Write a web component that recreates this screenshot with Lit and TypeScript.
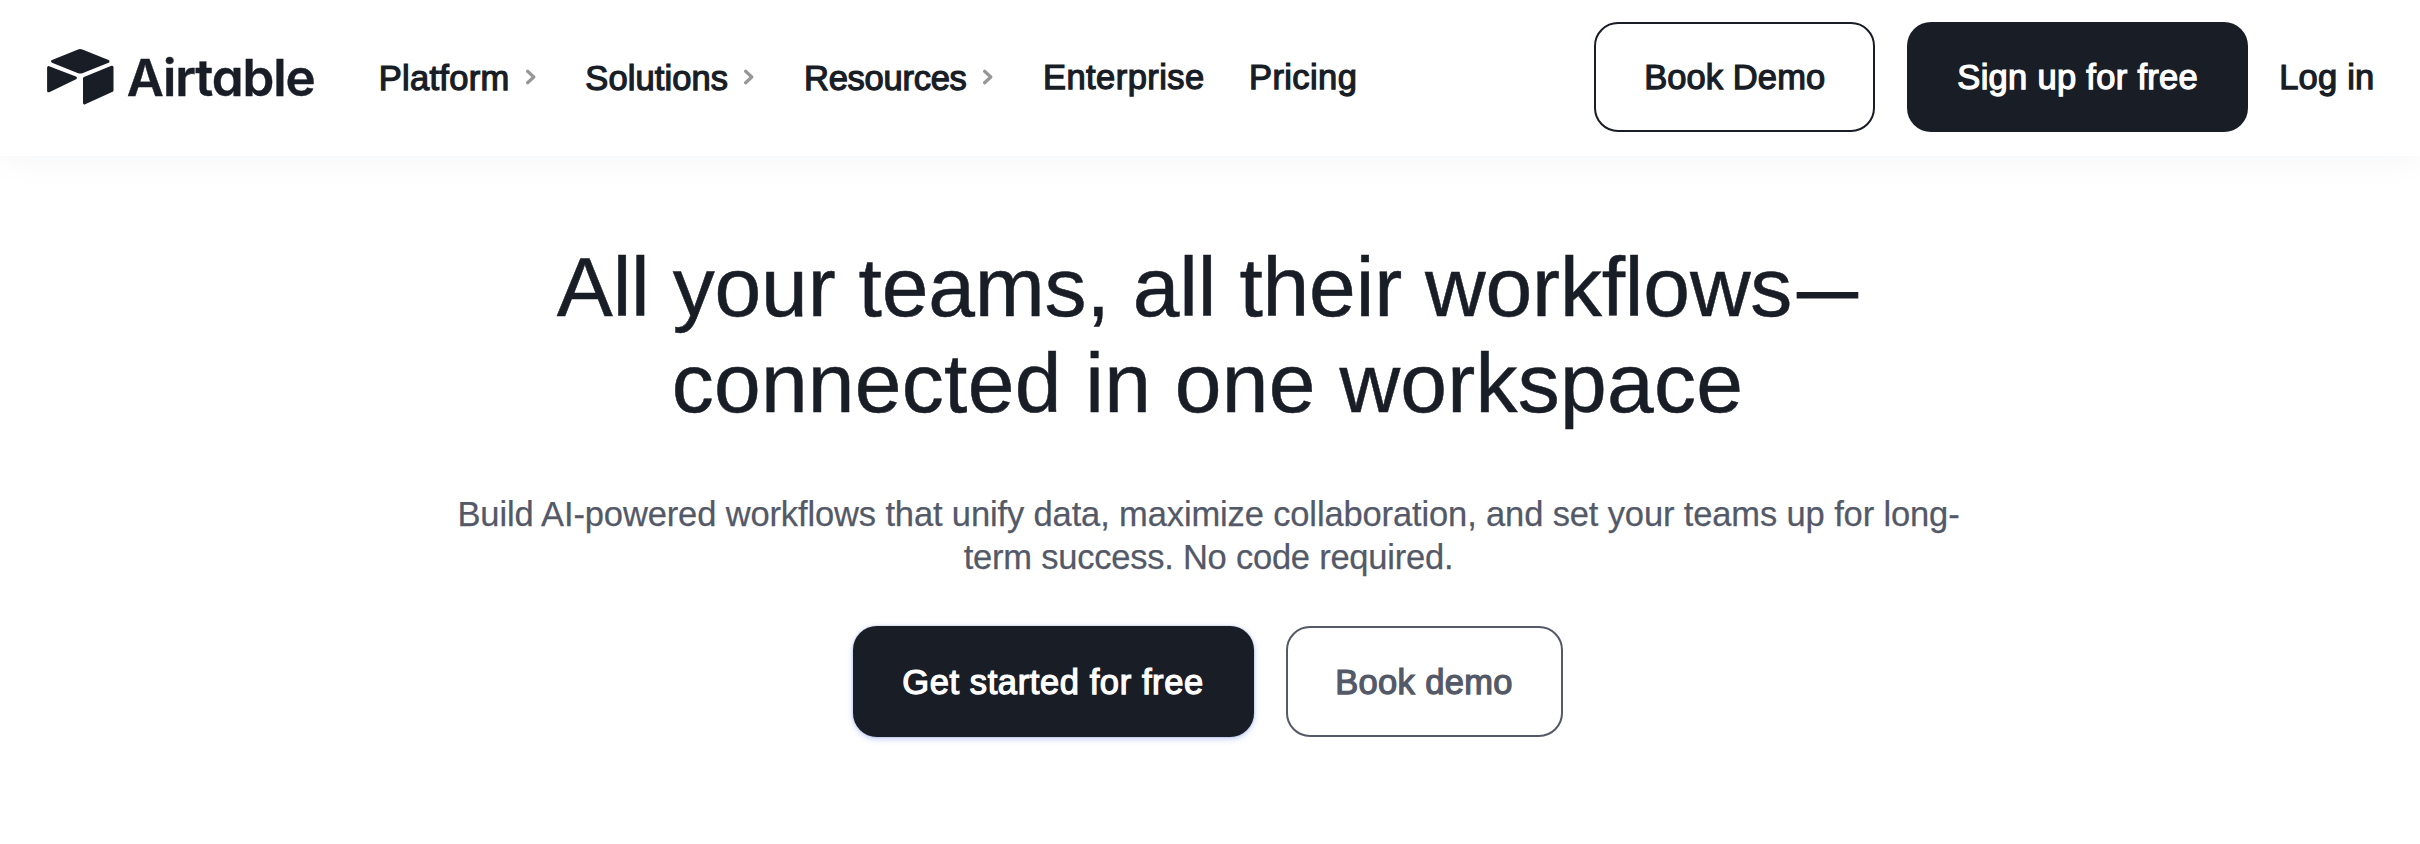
import { LitElement, html, css, svg, nothing } from "lit";
import { styleMap } from "lit/directives/style-map.js";

interface NavItem {
  label: string;
  tracking: number;
  menu: boolean;
}

const NAV: NavItem[] = [
  { label: "Platform", tracking: 0.3, menu: true },
  { label: "Solutions", tracking: 0.1, menu: true },
  { label: "Resources", tracking: -0.25, menu: true },
  { label: "Enterprise", tracking: 0.45, menu: false },
  { label: "Pricing", tracking: 0.4, menu: false },
];

const chevron = svg`<path d="M2.6 2.3 8.8 8 2.6 13.7" fill="none" stroke="#979797" stroke-width="3.2" stroke-linecap="round" stroke-linejoin="round"/>`;

class AppRoot extends LitElement {
  static styles = css`
    :host {
      display: block;
      min-height: 844px;
      background: #fff;
      color: #181d26;
      font-family: "Liberation Sans", Arial, sans-serif;
      font-size: 34.5px;
      overflow: hidden;
    }
    header {
      display: flex;
      align-items: center;
      box-sizing: border-box;
      height: 156px;
      padding: 22px 46px 24px;
      background: #fff;
      box-shadow: 0 0 2px rgba(0, 0, 0, 0.02), 0 4px 34px rgba(24, 50, 100, 0.045);
    }
    .logo {
      display: flex;
      align-items: center;
      width: 332.7px;
      flex: none;
    }
    .mark {
      display: block;
      width: 68px;
      height: 58px;
      margin-right: 12.8px;
    }
    .wordmark {
      padding-top: 1px;
      font-family: Inter, sans-serif;
      font-size: 51px;
      font-weight: 600;
      line-height: 60px;
      letter-spacing: -1.1px;
      font-feature-settings: "cv11";
      -webkit-text-stroke: 0.4px currentColor;
    }
    nav {
      display: grid;
      grid-template-columns: 206.6px 218.7px 239px 206px auto;
    }
    .item,
    .btn,
    .login {
      -webkit-text-stroke: 1.25px currentColor;
      white-space: nowrap;
    }
    .item {
      display: flex;
      align-items: center;
      line-height: 40px;
    }
    .item.menu {
      padding-top: 2px;
    }
    .chevron {
      flex: none;
      width: 11px;
      height: 16px;
      margin-left: 15px;
      margin-bottom: 2px;
    }
    .actions {
      display: flex;
      align-items: center;
      gap: 32px;
      margin-left: auto;
    }
    .btn {
      display: flex;
      align-items: center;
      justify-content: center;
      box-sizing: border-box;
      height: 110px;
      border-radius: 24px;
    }
    .outline {
      border: 2px solid currentColor;
    }
    .solid {
      background: #181d26;
      color: #fff;
    }
    .demo {
      width: 281px;
      letter-spacing: 0.1px;
    }
    .signup {
      width: 341px;
      letter-spacing: 0.3px;
    }
    .login {
      width: 94.8px;
      margin-left: -1px;
      letter-spacing: 0.2px;
    }
    .hero {
      display: flex;
      flex-direction: column;
      align-items: center;
      padding: 83px 5px 0 0;
      text-align: center;
      white-space: nowrap;
    }
    h1 {
      margin: 0;
      font-size: 84px;
      font-weight: 400;
      line-height: 96px;
      -webkit-text-stroke: 0.5px currentColor;
    }
    .line {
      display: block;
    }
    .h-first {
      letter-spacing: -0.18px;
    }
    .h-second {
      letter-spacing: 0.27px;
    }
    .dash {
      display: inline-block;
      width: 61px;
      margin-left: 5px;
      letter-spacing: 0;
      text-align: left;
      transform: scaleX(0.726);
      transform-origin: left;
      -webkit-text-stroke: 1px currentColor;
    }
    p {
      margin: 62px 0 0;
      padding-left: 2px;
      color: #545968;
      line-height: 43px;
      -webkit-text-stroke: 0.25px currentColor;
    }
    .p-first {
      letter-spacing: -0.13px;
    }
    .p-second {
      letter-spacing: -0.23px;
    }
    .cta {
      display: flex;
      gap: 32px;
      margin-top: 47px;
    }
    .cta .btn {
      height: 111px;
      padding-top: 1px;
    }
    .start {
      width: 401px;
      letter-spacing: 0.6px;
      box-shadow: 0 0 2px rgba(15, 48, 106, 0.3), 0 2px 6px rgba(45, 90, 230, 0.28);
    }
    .demo-muted {
      width: 277px;
      letter-spacing: 0.35px;
      color: #545968;
    }
  `;

  render() {
    return html`
      <header>
        <div class="logo">
          <svg class="mark" viewBox="46 48 68 58" fill="#181d26" stroke="#181d26" stroke-width="3" stroke-linejoin="round">
            <path d="M78.6 50.8Q80.2 50.2 81.8 50.8L108 61.4 81.8 71.8Q80.2 72.4 78.6 71.8L52.6 61.4Z" />
            <path d="M48.6 67.6 75.4 78 48.6 90.8Z" />
            <path d="M84.5 78.3 112 67.2V90.4L84.5 103Z" />
          </svg>
          <span class="wordmark">Airtable</span>
        </div>
        <nav>
          ${NAV.map(
            (n) => html`<span class="item ${n.menu ? "menu" : ""}">
              <span style=${styleMap({ letterSpacing: `${n.tracking}px` })}>${n.label}</span>
              ${n.menu ? html`<svg class="chevron" viewBox="0 0 11 16">${chevron}</svg>` : nothing}
            </span>`
          )}
        </nav>
        <div class="actions">
          <span class="btn outline demo">Book Demo</span>
          <span class="btn solid signup">Sign up for free</span>
          <span class="login">Log in</span>
        </div>
      </header>
      <section class="hero">
        <h1>
          <span class="line h-first">All your teams, all their workflows<span class="dash">—</span></span>
          <span class="line h-second">connected in one workspace</span>
        </h1>
        <p>
          <span class="line p-first">Build AI-powered workflows that unify data, maximize collaboration, and set your teams up for long-</span>
          <span class="line p-second">term success. No code required.</span>
        </p>
        <div class="cta">
          <span class="btn solid start">Get started for free</span>
          <span class="btn outline demo-muted">Book demo</span>
        </div>
      </section>
    `;
  }
}
customElements.define("app-root", AppRoot);
